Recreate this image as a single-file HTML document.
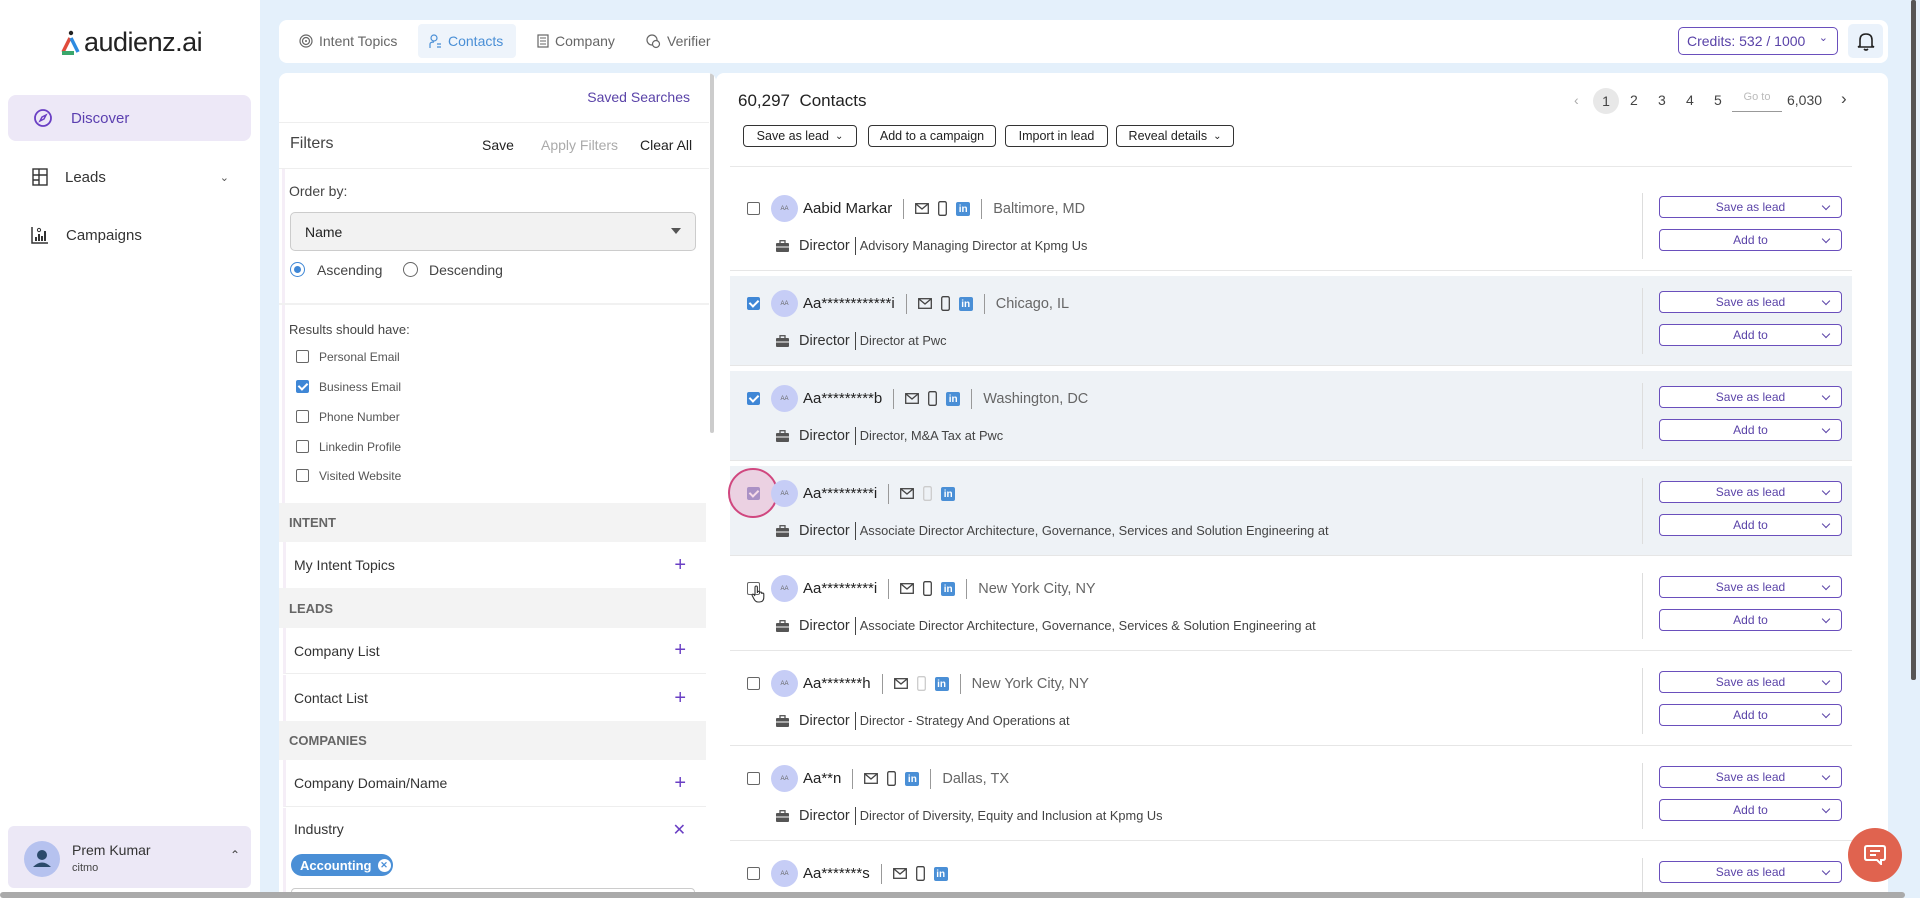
<!DOCTYPE html>
<html><head><meta charset="utf-8"><style>
*{box-sizing:border-box;margin:0;padding:0}
html{width:1920px;height:898px;overflow:hidden}
body{width:1920px;height:898px;overflow:hidden;background:#e4f0fb;font-family:"Liberation Sans",sans-serif;color:#333;position:relative}
.abs{position:absolute}
.side{left:0;top:0;width:260px;height:898px;background:#fff}
.nav{position:absolute;left:8px;width:243px;display:flex;align-items:center;font-size:15px;color:#333}
.topbar{left:279px;top:20px;width:1609px;height:43px;background:#fff;border-radius:8px}
.tab{position:absolute;top:4px;height:34px;display:flex;align-items:center;font-size:14px;color:#666;gap:6px}
.fp{left:279px;top:73px;width:437px;height:825px;background:#fff;border-radius:8px 8px 0 0;overflow:hidden}
.rp{left:716px;top:73px;width:1172px;height:825px;background:#fff;border-radius:8px 8px 0 0}
.cb{position:absolute;width:13px;height:13px;border:1.5px solid #666;border-radius:2px;background:#fff}
.cb.on{background:#3f87d6;border-color:#3f87d6}
.cb.on::after{content:"";position:absolute;left:3px;top:0px;width:4px;height:7px;border:solid #fff;border-width:0 2px 2px 0;transform:rotate(45deg)}
.band{position:absolute;left:0;width:427px;background:#f3f3f3;font-size:13px;font-weight:bold;color:#666;padding-left:10px;display:flex;align-items:center}
.item{position:absolute;left:4px;width:423px;background:#fff;font-size:14px;color:#333;padding-left:8px;display:flex;align-items:center;border-left:3px solid #f5eef7}
.plus{position:absolute;right:20px;color:#6a3fc4;font-size:20px;font-weight:300}
.btn{position:absolute;top:125px;height:22px;border:1px solid #333;border-radius:4px;font-size:12.5px;display:flex;align-items:center;justify-content:center;gap:6px;color:#222;white-space:nowrap}
.row{position:absolute;left:730px;width:1122px;height:90px;border-bottom:1px solid #e6e6e6}
.row.sel{background:#eef2f6}
.pb{position:absolute;left:929px;width:183px;height:22px;border:1.3px solid #6a4fbc;border-radius:4px;color:#5a43a8;font-size:12px;display:flex;align-items:center;justify-content:center;background:#fff}
.pb::after{content:"";position:absolute;right:12px;top:6px;width:5px;height:5px;border:solid #5a43a8;border-width:0 1.5px 1.5px 0;transform:rotate(45deg)}
.l1{position:absolute;left:41px;top:14px;height:27px;display:flex;align-items:center;font-size:15px;color:#222;white-space:nowrap}
.av{width:27px;height:27px;border-radius:50%;background:#c6cdf6;font-size:6px;color:#666;display:flex;align-items:center;justify-content:center;margin-right:5px}
.sep{width:1px;height:20px;background:#999;margin:0 11px}
.loc{color:#666;font-size:14.5px}
.l2{position:absolute;left:46px;top:55px;height:20px;display:flex;align-items:center;font-size:14.5px;color:#333;white-space:nowrap}
.l2 .t{font-size:12.8px;color:#444;border-left:1.5px solid #444;padding-left:4px;margin-left:5px;line-height:18px}
.vs{position:absolute;left:912px;top:12px;width:1px;height:66px;background:#ddd}
.ic{display:flex;gap:9px;align-items:center}
.li{width:14px;height:14px;background:#4a8fd6;border-radius:2px;color:#fff;font-size:10px;font-weight:bold;display:flex;align-items:flex-end;justify-content:center;line-height:12px}
.pg{position:absolute;top:92px;font-size:14px;color:#444}
.cl{position:absolute;left:40px;font-size:12px;color:#555}
</style></head><body>
<div class="abs side">
  <div class="abs" style="left:61px;top:27px;display:flex;align-items:center">
    <svg width="20" height="26" viewBox="0 0 20 26"><circle cx="10" cy="3" r="2.2" fill="#222"/><path d="M9 8 L2 22" stroke="#e14b3b" stroke-width="3.5"/><path d="M10 8 L17 22" stroke="#2d8be0" stroke-width="3.5"/><rect x="1" y="21" width="12" height="4" fill="#3aa66b"/></svg>
    <span style="font-size:27px;color:#222;margin-left:3px;letter-spacing:-0.5px">audienz.ai</span>
  </div>
  <div class="nav" style="top:95px;height:46px;background:#ede8f7;border-radius:8px;color:#5b3fb0">
    <svg style="margin:0 18px 0 25px" width="20" height="20" viewBox="0 0 20 20"><circle cx="10" cy="10" r="8" fill="none" stroke="#6a3fc4" stroke-width="1.8"/><path d="M13 7 L11 11 L7 13 L9 9Z" fill="none" stroke="#6a3fc4" stroke-width="1.5"/></svg>Discover</div>
  <div class="nav" style="top:164px;height:26px"><svg style="margin:0 17px 0 24px" width="16" height="18" viewBox="0 0 16 18"><rect x="1" y="1" width="14" height="16" fill="none" stroke="#333" stroke-width="1.4"/><path d="M1 7H15M7 1V17M1 12H7" stroke="#333" stroke-width="1.4"/></svg>Leads<span style="position:absolute;right:22px;font-size:11px;color:#555">&#8964;</span></div>
  <div class="nav" style="top:222px;height:26px"><svg style="margin:0 17px 0 23px" width="18" height="18" viewBox="0 0 18 18"><path d="M1 1V17H17" stroke="#333" stroke-width="1.5" fill="none"/><path d="M5 15V11M8 15V8M11 15V10M14 15V5" stroke="#333" stroke-width="2"/><circle cx="8" cy="4" r="1.6" fill="none" stroke="#333"/></svg>Campaigns</div>
  <div class="abs" style="left:8px;top:826px;width:243px;height:62px;background:#ece8f6;border-radius:6px">
    <div class="abs" style="left:16px;top:15px;width:36px;height:36px;border-radius:50%;background:#b6c2ef"><svg width="36" height="36" viewBox="0 0 36 36"><circle cx="18" cy="14" r="5" fill="#2b4a6b"/><path d="M9 26 Q18 17 27 26Z" fill="#2b4a6b"/></svg></div>
    <div class="abs" style="left:64px;top:16px;font-size:14px;color:#333">Prem Kumar</div>
    <div class="abs" style="left:64px;top:36px;font-size:11px;color:#444">citmo</div>
    <div class="abs" style="left:222px;top:22px;font-size:12px;color:#444">&#8963;</div>
  </div>
</div>

<div class="abs topbar">
  <div class="tab" style="left:20px"><svg width="14" height="14" viewBox="0 0 14 14"><circle cx="7" cy="7" r="6" fill="none" stroke="#666" stroke-width="1.2"/><circle cx="7" cy="7" r="3.5" fill="none" stroke="#666" stroke-width="1.2"/><circle cx="7" cy="7" r="1" fill="#666"/></svg>Intent Topics</div>
  <div class="tab" style="left:139px;width:98px;padding-left:11px;background:#eef4fb;border-radius:4px;color:#4a8fd6"><svg width="13" height="15" viewBox="0 0 13 15"><circle cx="5" cy="4" r="3" fill="none" stroke="#4a8fd6" stroke-width="1.2"/><path d="M1 14V10Q1 8 5 8M8 10H12M8 13H12" stroke="#4a8fd6" stroke-width="1.2" fill="none"/></svg>Contacts</div>
  <div class="tab" style="left:258px"><svg width="12" height="14" viewBox="0 0 12 14"><rect x="1" y="1" width="10" height="12" fill="none" stroke="#666" stroke-width="1.2"/><path d="M3 4H9M3 7H9M3 10H9" stroke="#666"/></svg>Company</div>
  <div class="tab" style="left:367px"><svg width="15" height="15" viewBox="0 0 15 15"><circle cx="6" cy="6" r="5" fill="none" stroke="#666" stroke-width="1.2"/><circle cx="10" cy="10" r="3.5" fill="#fff" stroke="#666" stroke-width="1.2"/></svg>Verifier</div>
  <div class="abs" style="left:1399px;top:7px;width:160px;height:28px;border:1.3px solid #6a4fbc;border-radius:5px;color:#5a43a8;font-size:14px;display:flex;align-items:center;padding-left:8px">Credits: 532 / 1000<span style="position:absolute;right:9px;top:3px;font-size:11px">&#8964;</span></div>
  <div class="abs" style="left:1569px;top:4px;width:35px;height:34px;background:#eaf2fb;border-radius:5px;display:flex;align-items:center;justify-content:center"><svg width="18" height="20" viewBox="0 0 18 20"><path d="M3 15V9Q3 3 9 3Q15 3 15 9V15L17 16H1Z" fill="none" stroke="#222" stroke-width="1.6"/><path d="M7 18Q9 20 11 18" stroke="#222" stroke-width="1.6" fill="none"/></svg></div>
</div>

<div class="abs fp">
  <div class="abs" style="right:26px;top:16px;font-size:14px;color:#5a43a8">Saved Searches</div>
  <div class="abs" style="left:0;top:49px;width:430px;height:1px;background:#eee"></div>
  <div class="abs" style="left:11px;top:62px;font-size:16px;color:#444">Filters</div>
  <div class="abs" style="left:203px;top:64px;font-size:14px;color:#222">Save</div>
  <div class="abs" style="left:262px;top:64px;font-size:14px;color:#aaa">Apply Filters</div>
  <div class="abs" style="left:361px;top:64px;font-size:14px;color:#222">Clear All</div>
  <div class="abs" style="left:0;top:95px;width:430px;height:1px;background:#eee"></div>
  <div class="abs" style="left:3px;top:96px;width:3px;height:134px;background:#f5eef7"></div>
  <div class="abs" style="left:10px;top:110px;font-size:14px;color:#444">Order by:</div>
  <div class="abs" style="left:11px;top:139px;width:406px;height:39px;background:#f2f2f2;border:1px solid #ccc;border-radius:5px;font-size:14px;color:#222;display:flex;align-items:center;padding-left:14px">Name<span style="position:absolute;right:14px;top:15px;border:5px solid transparent;border-top:6px solid #555"></span></div>
  <div class="abs" style="left:11px;top:189px;width:15px;height:15px;border:1.5px solid #3f87d6;border-radius:50%"><div style="margin:2.5px;width:7px;height:7px;border-radius:50%;background:#3f87d6"></div></div>
  <div class="abs" style="left:38px;top:189px;font-size:14px;color:#444">Ascending</div>
  <div class="abs" style="left:124px;top:189px;width:15px;height:15px;border:1.5px solid #666;border-radius:50%"></div>
  <div class="abs" style="left:150px;top:189px;font-size:14px;color:#444">Descending</div>
  <div class="abs" style="left:0;top:230px;width:430px;height:2px;background:#f1f1f1"></div>
  <div class="abs" style="left:3px;top:232px;width:3px;height:198px;background:#f5eef7"></div>
  <div class="abs" style="left:10px;top:249px;font-size:13px;color:#444">Results should have:</div>
  <div class="cb" style="left:17px;top:277px"></div><div class="cl" style="top:277px">Personal Email</div>
  <div class="cb on" style="left:17px;top:307px"></div><div class="cl" style="top:307px">Business Email</div>
  <div class="cb" style="left:17px;top:337px"></div><div class="cl" style="top:337px">Phone Number</div>
  <div class="cb" style="left:17px;top:367px"></div><div class="cl" style="top:367px">Linkedin Profile</div>
  <div class="cb" style="left:17px;top:396px"></div><div class="cl" style="top:396px">Visited Website</div>
  <div class="band" style="top:430px;height:39px">INTENT</div>
  <div class="item" style="top:469px;height:46px">My Intent Topics<span class="plus">+</span></div>
  <div class="band" style="top:515px;height:40px">LEADS</div>
  <div class="item" style="top:555px;height:46px;border-bottom:1px solid #eee">Company List<span class="plus">+</span></div>
  <div class="item" style="top:602px;height:46px">Contact List<span class="plus">+</span></div>
  <div class="band" style="top:648px;height:39px">COMPANIES</div>
  <div class="item" style="top:687px;height:47px;border-bottom:1px solid #eee">Company Domain/Name<span class="plus">+</span></div>
  <div class="item" style="top:735px;height:120px;align-items:flex-start;padding-top:13px">Industry<span class="plus" style="font-size:16px;top:12px">✕</span>
    <div class="abs" style="left:5px;top:46px;width:102px;height:22px;border-radius:11px;background:#4a8fd6;color:#fff;font-size:13px;font-weight:bold;display:flex;align-items:center;padding-left:9px">Accounting<span style="margin-left:6px;width:13px;height:13px;border-radius:50%;background:#fff;color:#4a8fd6;font-size:9px;display:flex;align-items:center;justify-content:center">✕</span></div>
    <div class="abs" style="left:5px;top:80px;width:404px;height:40px;border:1px solid #ccc;border-radius:4px"></div>
  </div>
  <div class="abs" style="left:431px;top:0;width:4px;height:360px;background:#ccc;border-radius:2px"></div>
</div>

<div class="abs rp"></div>
<div class="abs" style="left:738px;top:91px;font-size:17px;color:#222">60,297&nbsp; Contacts</div>
<div class="btn" style="left:743px;width:114px">Save as lead <span style="font-size:10px">&#8964;</span></div>
<div class="btn" style="left:868px;width:128px">Add to a campaign</div>
<div class="btn" style="left:1005px;width:103px">Import in lead</div>
<div class="btn" style="left:1116px;width:118px">Reveal details <span style="font-size:10px">&#8964;</span></div>
<div class="abs" style="left:730px;top:166px;width:1122px;height:1px;background:#e8e8e8"></div>
<div class="pg" style="left:1574px;color:#aaa">&#8249;</div>
<div class="abs" style="left:1593px;top:88px;width:26px;height:26px;border-radius:50%;background:#e8e8e8;font-size:14px;color:#444;display:flex;align-items:center;justify-content:center">1</div>
<div class="pg" style="left:1630px">2</div><div class="pg" style="left:1658px">3</div><div class="pg" style="left:1686px">4</div><div class="pg" style="left:1714px">5</div>
<div class="abs" style="left:1732px;top:91px;width:50px;height:21px;border-bottom:1px solid #999;font-size:11px;color:#bbb;text-align:center">Go to</div>
<div class="pg" style="left:1787px">6,030</div>
<div class="pg" style="left:1841px;font-size:17px;top:89px">&#8250;</div>

<!-- rows -->
<div class="row" style="top:181px">
  <div class="cb" style="left:17px;top:21px"></div>
  <div class="l1"><div class="av">AA</div>Aabid Markar<div class="sep"></div><div class="ic"><svg width="14" height="11" viewBox="0 0 14 11"><rect x="0.7" y="0.7" width="12.6" height="9.6" fill="none" stroke="#444" stroke-width="1.3"/><path d="M1 1L7 6L13 1" fill="none" stroke="#444" stroke-width="1.3"/></svg><svg width="9" height="15" viewBox="0 0 9 15"><rect x="0.7" y="0.7" width="7.6" height="13.6" rx="1.5" fill="none" stroke="#444" stroke-width="1.3"/></svg><div class="li">in</div></div><div class="sep"></div><span class="loc">Baltimore, MD</span></div>
  <div class="l2"><svg width="13" height="12" viewBox="0 0 13 12" style="margin-right:10px"><rect x="0" y="3" width="13" height="9" rx="1" fill="#555"/><rect x="4" y="0.7" width="5" height="3" fill="none" stroke="#555" stroke-width="1.3"/><rect x="0" y="6.5" width="13" height="1" fill="#fff"/></svg>Director<span class="t">Advisory Managing Director at Kpmg Us</span></div>
  <div class="vs"></div><div class="pb" style="top:15px">Save as lead</div><div class="pb" style="top:48px">Add to</div>
</div>
<div class="row sel" style="top:276px">
  <div class="cb on" style="left:17px;top:21px"></div>
  <div class="l1"><div class="av">AA</div>Aa************i<div class="sep"></div><div class="ic"><svg width="14" height="11" viewBox="0 0 14 11"><rect x="0.7" y="0.7" width="12.6" height="9.6" fill="none" stroke="#444" stroke-width="1.3"/><path d="M1 1L7 6L13 1" fill="none" stroke="#444" stroke-width="1.3"/></svg><svg width="9" height="15" viewBox="0 0 9 15"><rect x="0.7" y="0.7" width="7.6" height="13.6" rx="1.5" fill="none" stroke="#444" stroke-width="1.3"/></svg><div class="li">in</div></div><div class="sep"></div><span class="loc">Chicago, IL</span></div>
  <div class="l2"><svg width="13" height="12" viewBox="0 0 13 12" style="margin-right:10px"><rect x="0" y="3" width="13" height="9" rx="1" fill="#555"/><rect x="4" y="0.7" width="5" height="3" fill="none" stroke="#555" stroke-width="1.3"/><rect x="0" y="6.5" width="13" height="1" fill="#fff"/></svg>Director<span class="t">Director at Pwc</span></div>
  <div class="vs"></div><div class="pb" style="top:15px">Save as lead</div><div class="pb" style="top:48px">Add to</div>
</div>
<div class="row sel" style="top:371px">
  <div class="cb on" style="left:17px;top:21px"></div>
  <div class="l1"><div class="av">AA</div>Aa*********b<div class="sep"></div><div class="ic"><svg width="14" height="11" viewBox="0 0 14 11"><rect x="0.7" y="0.7" width="12.6" height="9.6" fill="none" stroke="#444" stroke-width="1.3"/><path d="M1 1L7 6L13 1" fill="none" stroke="#444" stroke-width="1.3"/></svg><svg width="9" height="15" viewBox="0 0 9 15"><rect x="0.7" y="0.7" width="7.6" height="13.6" rx="1.5" fill="none" stroke="#444" stroke-width="1.3"/></svg><div class="li">in</div></div><div class="sep"></div><span class="loc">Washington, DC</span></div>
  <div class="l2"><svg width="13" height="12" viewBox="0 0 13 12" style="margin-right:10px"><rect x="0" y="3" width="13" height="9" rx="1" fill="#555"/><rect x="4" y="0.7" width="5" height="3" fill="none" stroke="#555" stroke-width="1.3"/><rect x="0" y="6.5" width="13" height="1" fill="#fff"/></svg>Director<span class="t">Director, M&amp;A Tax at Pwc</span></div>
  <div class="vs"></div><div class="pb" style="top:15px">Save as lead</div><div class="pb" style="top:48px">Add to</div>
</div>
<div class="row sel" style="top:466px">
  <div class="cb on" style="left:17px;top:21px;background:#8b8fc9;border-color:#8b8fc9"></div>
  <div class="abs" style="left:-2px;top:2px;width:50px;height:50px;border-radius:50%;border:2px solid #d0477f;background:rgba(230,150,190,0.35)"></div>
  <div class="l1"><div class="av">AA</div>Aa*********i<div class="sep"></div><div class="ic"><svg width="14" height="11" viewBox="0 0 14 11"><rect x="0.7" y="0.7" width="12.6" height="9.6" fill="none" stroke="#444" stroke-width="1.3"/><path d="M1 1L7 6L13 1" fill="none" stroke="#444" stroke-width="1.3"/></svg><svg width="9" height="15" viewBox="0 0 9 15"><rect x="0.7" y="0.7" width="7.6" height="13.6" rx="1.5" fill="none" stroke="#ccc" stroke-width="1.3"/></svg><div class="li">in</div></div></div>
  <div class="l2"><svg width="13" height="12" viewBox="0 0 13 12" style="margin-right:10px"><rect x="0" y="3" width="13" height="9" rx="1" fill="#555"/><rect x="4" y="0.7" width="5" height="3" fill="none" stroke="#555" stroke-width="1.3"/><rect x="0" y="6.5" width="13" height="1" fill="#fff"/></svg>Director<span class="t">Associate Director Architecture, Governance, Services and Solution Engineering at</span></div>
  <div class="vs"></div><div class="pb" style="top:15px">Save as lead</div><div class="pb" style="top:48px">Add to</div>
</div>
<div class="row" style="top:561px">
  <div class="cb" style="left:17px;top:21px"></div>
  <svg class="abs" style="left:21px;top:24px" width="14" height="18" viewBox="0 0 14 18"><path d="M4 10V2.5Q4 1 5.2 1Q6.4 1 6.4 2.5V8M6.4 7.5Q6.4 6.3 7.5 6.3Q8.6 6.3 8.6 7.5V8.5M8.6 8Q8.6 7 9.7 7Q10.8 7 10.8 8.2V9M10.8 9Q10.8 8 11.8 8Q12.8 8 12.8 9.3V12Q12.8 17 8.5 17H7Q4.5 17 3 14L1.2 10.5Q0.8 9.4 1.8 9.2Q2.8 9 4 11" fill="#fff" stroke="#333" stroke-width="1.1"/></svg>
  <div class="l1"><div class="av">AA</div>Aa*********i<div class="sep"></div><div class="ic"><svg width="14" height="11" viewBox="0 0 14 11"><rect x="0.7" y="0.7" width="12.6" height="9.6" fill="none" stroke="#444" stroke-width="1.3"/><path d="M1 1L7 6L13 1" fill="none" stroke="#444" stroke-width="1.3"/></svg><svg width="9" height="15" viewBox="0 0 9 15"><rect x="0.7" y="0.7" width="7.6" height="13.6" rx="1.5" fill="none" stroke="#444" stroke-width="1.3"/></svg><div class="li">in</div></div><div class="sep"></div><span class="loc">New York City, NY</span></div>
  <div class="l2"><svg width="13" height="12" viewBox="0 0 13 12" style="margin-right:10px"><rect x="0" y="3" width="13" height="9" rx="1" fill="#555"/><rect x="4" y="0.7" width="5" height="3" fill="none" stroke="#555" stroke-width="1.3"/><rect x="0" y="6.5" width="13" height="1" fill="#fff"/></svg>Director<span class="t">Associate Director Architecture, Governance, Services &amp; Solution Engineering at</span></div>
  <div class="vs"></div><div class="pb" style="top:15px">Save as lead</div><div class="pb" style="top:48px">Add to</div>
</div>
<div class="row" style="top:656px">
  <div class="cb" style="left:17px;top:21px"></div>
  <div class="l1"><div class="av">AA</div>Aa*******h<div class="sep"></div><div class="ic"><svg width="14" height="11" viewBox="0 0 14 11"><rect x="0.7" y="0.7" width="12.6" height="9.6" fill="none" stroke="#444" stroke-width="1.3"/><path d="M1 1L7 6L13 1" fill="none" stroke="#444" stroke-width="1.3"/></svg><svg width="9" height="15" viewBox="0 0 9 15"><rect x="0.7" y="0.7" width="7.6" height="13.6" rx="1.5" fill="none" stroke="#ccc" stroke-width="1.3"/></svg><div class="li">in</div></div><div class="sep"></div><span class="loc">New York City, NY</span></div>
  <div class="l2"><svg width="13" height="12" viewBox="0 0 13 12" style="margin-right:10px"><rect x="0" y="3" width="13" height="9" rx="1" fill="#555"/><rect x="4" y="0.7" width="5" height="3" fill="none" stroke="#555" stroke-width="1.3"/><rect x="0" y="6.5" width="13" height="1" fill="#fff"/></svg>Director<span class="t">Director - Strategy And Operations at</span></div>
  <div class="vs"></div><div class="pb" style="top:15px">Save as lead</div><div class="pb" style="top:48px">Add to</div>
</div>
<div class="row" style="top:751px">
  <div class="cb" style="left:17px;top:21px"></div>
  <div class="l1"><div class="av">AA</div>Aa**n<div class="sep"></div><div class="ic"><svg width="14" height="11" viewBox="0 0 14 11"><rect x="0.7" y="0.7" width="12.6" height="9.6" fill="none" stroke="#444" stroke-width="1.3"/><path d="M1 1L7 6L13 1" fill="none" stroke="#444" stroke-width="1.3"/></svg><svg width="9" height="15" viewBox="0 0 9 15"><rect x="0.7" y="0.7" width="7.6" height="13.6" rx="1.5" fill="none" stroke="#444" stroke-width="1.3"/></svg><div class="li">in</div></div><div class="sep"></div><span class="loc">Dallas, TX</span></div>
  <div class="l2"><svg width="13" height="12" viewBox="0 0 13 12" style="margin-right:10px"><rect x="0" y="3" width="13" height="9" rx="1" fill="#555"/><rect x="4" y="0.7" width="5" height="3" fill="none" stroke="#555" stroke-width="1.3"/><rect x="0" y="6.5" width="13" height="1" fill="#fff"/></svg>Director<span class="t">Director of Diversity, Equity and Inclusion at Kpmg Us</span></div>
  <div class="vs"></div><div class="pb" style="top:15px">Save as lead</div><div class="pb" style="top:48px">Add to</div>
</div>
<div class="row" style="top:846px;border:none;height:52px;overflow:hidden">
  <div class="cb" style="left:17px;top:21px"></div>
  <div class="l1"><div class="av">AA</div>Aa*******s<div class="sep"></div><div class="ic"><svg width="14" height="11" viewBox="0 0 14 11"><rect x="0.7" y="0.7" width="12.6" height="9.6" fill="none" stroke="#444" stroke-width="1.3"/><path d="M1 1L7 6L13 1" fill="none" stroke="#444" stroke-width="1.3"/></svg><svg width="9" height="15" viewBox="0 0 9 15"><rect x="0.7" y="0.7" width="7.6" height="13.6" rx="1.5" fill="none" stroke="#444" stroke-width="1.3"/></svg><div class="li">in</div></div></div>
  <div class="vs"></div><div class="pb" style="top:15px">Save as lead</div>
</div>

<div class="abs" style="left:1848px;top:828px;width:54px;height:54px;border-radius:50%;background:#e0634f;display:flex;align-items:center;justify-content:center"><svg width="22" height="20" viewBox="0 0 22 20"><path d="M3 1H19Q21 1 21 3V13Q21 15 19 15H17V19L13 15H3Q1 15 1 13V3Q1 1 3 1Z" fill="none" stroke="#fff" stroke-width="2"/><path d="M6 6H16M6 10H12" stroke="#fff" stroke-width="2"/></svg></div>
<div class="abs" style="left:1911px;top:0;width:5px;height:680px;background:#555;border-radius:2px"></div>
<div class="abs" style="left:0;top:892px;width:1905px;height:6px;background:#aaa;border-radius:3px"></div>
</body></html>
